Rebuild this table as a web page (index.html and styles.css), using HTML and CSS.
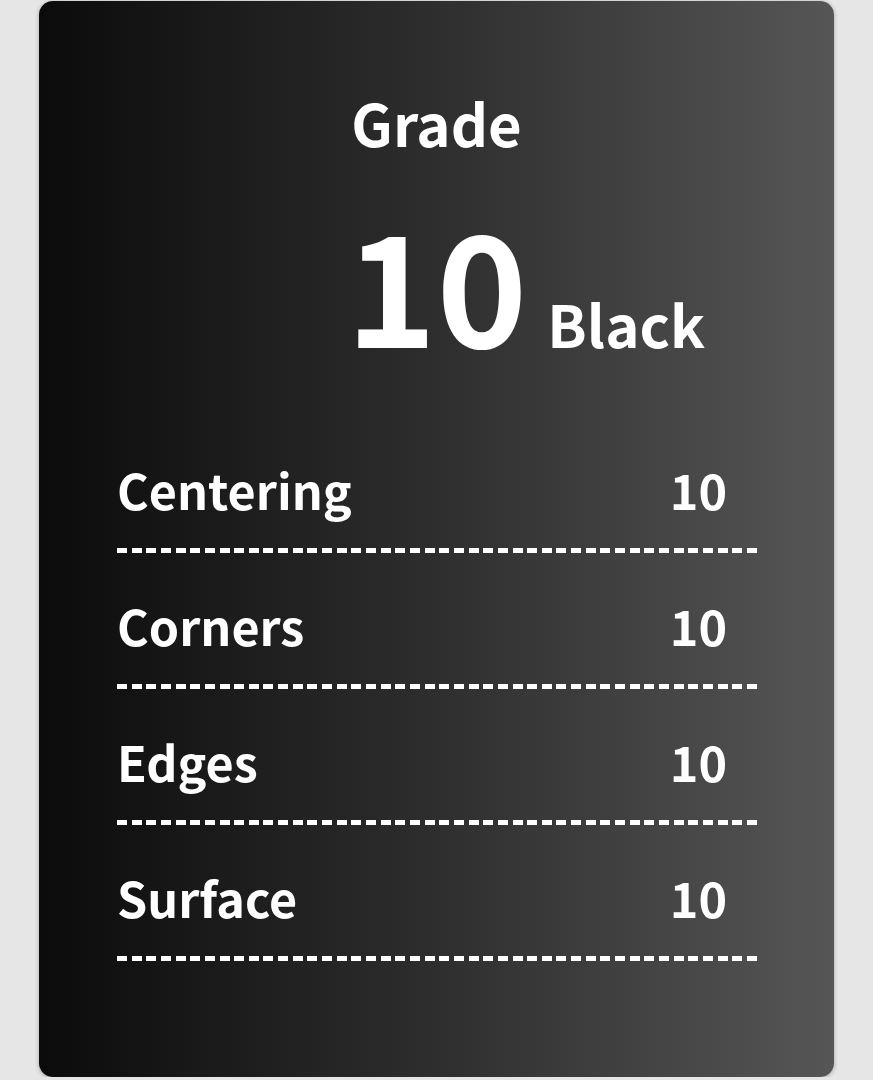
FILE: index.html
```html
<!DOCTYPE html>
<html lang="en">
<head>
<meta charset="utf-8">
<title>Grade</title>
<link rel="stylesheet" href="styles.css">
</head>
<body>
<div class="card">
  <div class="title">Grade</div>
  <div class="grade">
    <span class="grade-num">10</span>
    <span class="grade-label">Black</span>
  </div>
  <div class="rows">
    <div class="row"><div class="row-line"><span class="label">Centering</span><span class="value">10</span></div><div class="dash"></div></div>
    <div class="row"><div class="row-line"><span class="label">Corners</span><span class="value">10</span></div><div class="dash"></div></div>
    <div class="row"><div class="row-line"><span class="label">Edges</span><span class="value">10</span></div><div class="dash"></div></div>
    <div class="row"><div class="row-line"><span class="label">Surface</span><span class="value">10</span></div><div class="dash"></div></div>
  </div>
</div>
</body>
</html>
```

FILE: styles.css
```css
html, body {
  margin: 0;
  padding: 0;
  background: #e6e6e6;
}
body {
  font-family: "Noto Sans CJK JP", "Noto Sans", sans-serif;
  font-weight: 700;
  color: #fff;
}
.card {
  box-sizing: border-box;
  margin: 1px 0 0 39px;
  width: 795px;
  height: 1076px;
  border-radius: 14px;
  background: linear-gradient(to right, #0b0b0b 0%, #2e2e2e 50%, #565656 100%);
  box-shadow: 0 1px 4px rgba(0, 0, 0, 0.3);
  padding: 92px 77px 0 78px;
}
.title {
  font-size: 58px;
  line-height: 1;
  text-align: center;
  margin-left: -78px;
  margin-right: -77px;
}
.grade {
  display: grid;
  grid-template-columns: 1fr auto 1fr;
  align-items: baseline;
  margin: 53px -77px 59px -78px;
}
.grade-num {
  grid-column: 2;
  font-size: 154px;
  line-height: 1;
}
.grade-label {
  grid-column: 3;
  font-size: 58px;
  line-height: 1;
  padding-left: 20px;
}
.row {
  padding-top: 48px;
}
.row-line {
  display: flex;
  justify-content: space-between;
  font-size: 48.5px;
  line-height: 49px;
  padding-bottom: 34px;
}
.value {
  padding-right: 30px;
}
.dash {
  height: 5px;
  background: repeating-linear-gradient(to right, #fff 0 10px, transparent 10px 14.65px);
}
```
